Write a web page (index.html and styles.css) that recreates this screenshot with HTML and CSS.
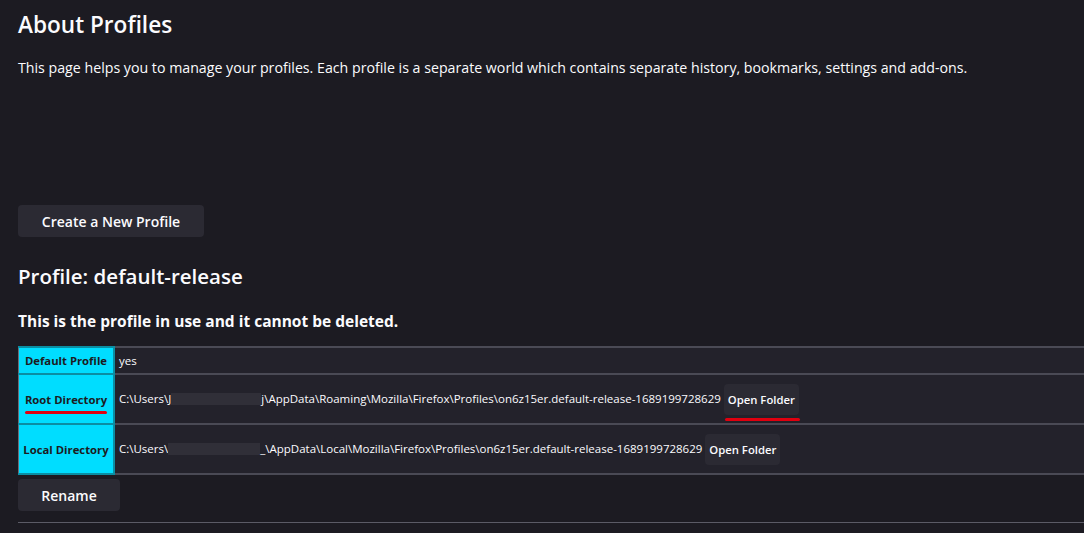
FILE: index.html
```html
<!DOCTYPE html>
<html lang="en">
<head>
<meta charset="utf-8">
<title>About Profiles</title>
<link rel="stylesheet" href="styles.css">
</head>
<body>
<main class="page">
  <h1 class="title">About Profiles</h1>
  <p class="intro">This page helps you to manage your profiles. Each profile is a separate world which contains separate history, bookmarks, settings and add-ons.</p>
  <div class="actions">
    <button class="btn btn-create">Create a New Profile</button>
  </div>
  <section class="profile">
    <h2 class="profile-name">Profile: default-release</h2>
    <h3 class="profile-note">This is the profile in use and it cannot be deleted.</h3>
    <table class="info">
      <tr class="row-short">
        <th>Default Profile</th>
        <td>yes</td>
      </tr>
      <tr>
        <th><span class="mark">Root Directory</span></th>
        <td>C:\Users\J<span class="redact redact-a"></span>j\AppData\Roaming\Mozilla\Firefox\Profiles\on6z15er.default-release-1689199728629 <button class="btn btn-small mark mark-btn">Open Folder</button></td>
      </tr>
      <tr>
        <th>Local Directory</th>
        <td>C:\Users\<span class="redact redact-b"></span>_\AppData\Local\Mozilla\Firefox\Profiles\on6z15er.default-release-1689199728629 <button class="btn btn-small">Open Folder</button></td>
      </tr>
    </table>
    <div class="profile-actions">
      <button class="btn btn-rename">Rename</button>
    </div>
    <hr class="sep">
  </section>
</main>
</body>
</html>
```

FILE: styles.css
```css
html, body {
  margin: 0;
  padding: 0;
  background: #1c1b22;
  color: #fbfbfe;
  font-family: "Open Sans", "Noto Sans", sans-serif;
}
.page {
  padding: 0 0 0 18px;
}
.title {
  margin: 0;
  padding-top: 10px;
  font-size: 22.6px;
  font-weight: 600;
  line-height: 30px;
}
.intro {
  margin: 18px 0 0;
  font-size: 14.2px;
  line-height: 20px;
}
.actions {
  margin-top: 127px;
}
.btn {
  font-family: inherit;
  background: #2b2a33;
  color: #fbfbfe;
  border: none;
  border-radius: 4px;
  font-weight: 600;
  cursor: pointer;
}
.btn-create {
  height: 32px;
  width: 186px;
  font-size: 14px;
  padding: 0;
}
.profile-name {
  margin: 24px 0 0;
  font-size: 20.5px;
  font-weight: 600;
  line-height: 30px;
}
.profile-note {
  margin: 18px 0 0;
  font-size: 15.5px;
  font-weight: 700;
  line-height: 24px;
}
.info {
  margin-top: 13px;
  width: calc(100% + 20px);
  border-collapse: collapse;
  border-top: 1px solid #8f8f9d;
  font-size: 11.5px;
}
.info th, .info td {
  border: 2px solid #4a4a55;
  height: 48px;
  padding: 0 4px;
}
.info th {
  background: #00ddff;
  color: #1c1b22;
  font-weight: 700;
  font-size: 11.3px;
  width: 86px;
  text-align: center;
  white-space: nowrap;
  border-color: #0b8ea3;
  border-left: 1px solid #6b6b75;
}
.info td {
  background: #23222b;
  white-space: nowrap;
}
.info .row-short th, .info .row-short td {
  height: 25px;
}
.redact {
  display: inline-block;
  vertical-align: middle;
  height: 12px;
  background: #302f38;
}
.redact-a { width: 90px; }
.redact-b { width: 92px; }
.btn-small {
  height: 31px;
  padding: 0 4px;
  font-size: 11.3px;
  vertical-align: middle;
}
.mark {
  position: relative;
}
.mark::after {
  content: "";
  position: absolute;
  left: 0;
  right: 0;
  bottom: -7px;
  height: 3px;
  border-radius: 2px;
  background: #e0000f;
}
.mark-btn::after {
  bottom: -6px;
  left: 1px;
  right: -1px;
}
.profile-actions {
  margin-top: 4px;
}
.btn-rename {
  height: 32px;
  width: 102px;
  font-size: 14px;
  padding: 0;
}
.sep {
  margin: 11px 0 0;
  border: none;
  border-top: 1px solid #5b5b66;
}
```
